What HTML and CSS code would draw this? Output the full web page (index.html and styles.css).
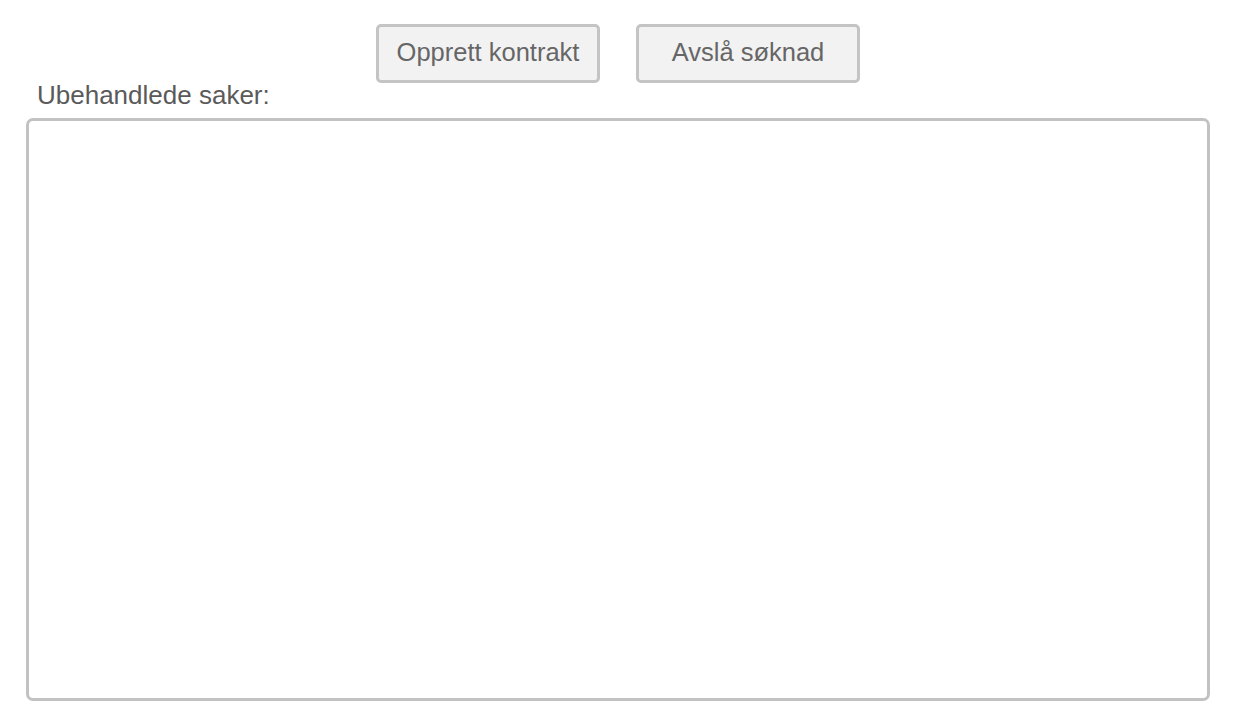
FILE: index.html
```html
<!DOCTYPE html>
<html lang="no">
<head>
<meta charset="utf-8">
<link rel="stylesheet" href="styles.css">
</head>
<body>
<div class="page">
  <div class="actions">
    <button class="btn">Opprett kontrakt</button>
    <button class="btn">Avslå søknad</button>
  </div>
  <div class="label">Ubehandlede saker:</div>
  <div class="listbox"></div>
</div>
</body>
</html>
```
FILE: styles.css
```css
html, body {
  margin: 0;
  padding: 0;
  background: #ffffff;
}
.page {
  font-family: "Liberation Sans", Arial, sans-serif;
  padding: 24px 32px 0 26px;
  width: 1242px;
  box-sizing: border-box;
}
.actions {
  display: flex;
  gap: 36px;
  padding-left: 350px;
}
.btn {
  width: 224px;
  height: 59px;
  box-sizing: border-box;
  border: 3px solid #c4c4c4;
  border-radius: 5px;
  background: #f2f2f2;
  color: #666666;
  font-family: "Liberation Sans", Arial, sans-serif;
  font-size: 25.5px;
  padding: 0 0 2px 0;
}
.label {
  margin-top: -3px;
  padding-left: 11px;
  font-size: 26px;
  line-height: 30px;
  color: #5a5a5a;
  height: 38px;
}
.listbox {
  width: 1184px;
  height: 583px;
  box-sizing: border-box;
  border: 3px solid #c2c2c2;
  border-radius: 7px;
  background: #ffffff;
}
```
